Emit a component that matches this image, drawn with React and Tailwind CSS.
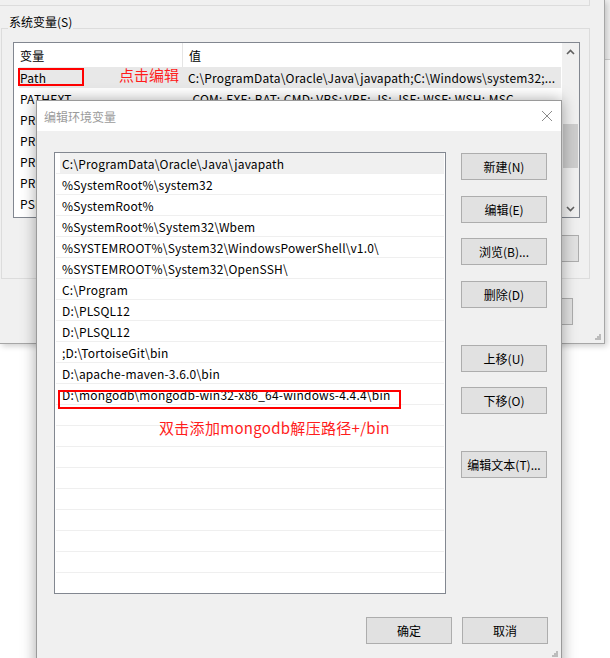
import React from 'react';

const PATHS = [
  'C:\\ProgramData\\Oracle\\Java\\javapath',
  '%SystemRoot%\\system32',
  '%SystemRoot%',
  '%SystemRoot%\\System32\\Wbem',
  '%SYSTEMROOT%\\System32\\WindowsPowerShell\\v1.0\\',
  '%SYSTEMROOT%\\System32\\OpenSSH\\',
  'C:\\Program',
  'D:\\PLSQL12',
  'D:\\PLSQL12',
  ';D:\\TortoiseGit\\bin',
  'D:\\apache-maven-3.6.0\\bin',
  'D:\\mongodb\\mongodb-win32-x86_64-windows-4.4.4\\bin',
];

const SYS_VARS = [
  { name: 'Path', value: 'C:\\ProgramData\\Oracle\\Java\\javapath;C:\\Windows\\system32;...' },
  { name: 'PATHEXT', value: '.COM;.EXE;.BAT;.CMD;.VBS;.VBE;.JS;.JSE;.WSF;.WSH;.MSC' },
  { name: 'PROCESSOR_ARCHITECTURE', value: 'AMD64' },
  { name: 'PROCESSOR_IDENTIFIER', value: 'Intel64 Family 6 Model 158' },
  { name: 'PROCESSOR_LEVEL', value: '6' },
  { name: 'PROCESSOR_REVISION', value: '9e0a' },
  { name: 'PSModulePath', value: '%ProgramFiles%\\WindowsPowerShell\\Modules' },
];

const Btn = ({ children, className = '' }) => (
  <div className={`flex items-center justify-center w-[86px] h-[27px] border border-[#adadad] bg-[#e1e1e1] text-[12px] text-black ${className}`}>
    {children}
  </div>
);

const Chevron = ({ up }) => (
  <svg width="9" height="6" viewBox="0 0 9 6">
    <path d={up ? 'M1 5 L4.5 1.5 L8 5' : 'M1 1 L4.5 4.5 L8 1'} fill="none" stroke="#606060" strokeWidth="1.6" />
  </svg>
);

const Grip = () => (
  <svg width="6" height="6" viewBox="0 0 6 6">
    <rect x="4" y="0" width="2" height="2" fill="#bcbcbc" />
    <rect x="2" y="2" width="2" height="2" fill="#bcbcbc" />
    <rect x="4" y="2" width="2" height="2" fill="#bcbcbc" />
    <rect x="0" y="4" width="2" height="2" fill="#bcbcbc" />
    <rect x="2" y="4" width="2" height="2" fill="#bcbcbc" />
    <rect x="4" y="4" width="2" height="2" fill="#bcbcbc" />
  </svg>
);

export default function App() {
  const emptyRows = Array.from({ length: 9 });

  return (
    <div className="relative w-[610px] h-[658px] bg-white overflow-hidden font-['Noto_Sans_CJK_SC',sans-serif] text-[12px] text-black">
      {/* window strip on the far right */}
      <div className="absolute right-0 top-0 w-[8px] h-[60px] bg-[#f0f0f0] border-b border-[#d0d0d0]" />

      {/* Back window: 环境变量 */}
      <div className="absolute left-0 top-0 w-[605px] h-[344px] bg-[#f0f0f0] border-r border-b border-[#a6a6a6] shadow-[2px_2px_6px_rgba(0,0,0,0.2)] flex flex-col">
        <div className="h-[6px] w-[590px] border-b border-r border-[#dcdcdc]" />

        <div className="relative mt-[22px] ml-[1px] w-[589px] h-[251px] border border-[#dcdcdc] flex flex-col">
          <span className="absolute left-[6px] -top-[15px] px-[1px] leading-[16px] bg-[#f0f0f0]">系统变量(S)</span>

          <div className="mt-[13px] ml-[11px] w-[567px] h-[176px] border border-[#828790] bg-white flex">
            <div className="flex-1 flex flex-col tracking-[0.2px]">
              <div className="h-[24px] flex items-center">
                <div className="w-[169px] h-full pl-[6px] pt-[1px] flex items-center border-r border-[#e5e5e5]">变量</div>
                <div className="pl-[6px] pt-[1px]">值</div>
              </div>
              {SYS_VARS.map((v, i) => (
                <div key={v.name} className={`h-[21px] ml-[5px] mr-[1px] pt-[1px] flex items-center whitespace-nowrap overflow-hidden ${i === 0 ? 'bg-[#e8e8e8]' : ''}`}>
                  <div className="w-[164px] pl-[1px] overflow-hidden">{v.name}</div>
                  <div className={i === 1 ? 'pl-[6px]' : 'pl-[5px]'}>{v.value}</div>
                </div>
              ))}
            </div>
            <div className="w-[17px] bg-[#f0f0f0] flex flex-col items-center">
              <div className="h-[17px] flex items-center justify-center"><Chevron up /></div>
              <div className="mt-[64px] w-[15px] h-[44px] bg-[#cdcdcd]" />
              <div className="flex-1" />
              <div className="h-[17px] flex items-center justify-center"><Chevron /></div>
            </div>
          </div>

          <div className="mt-[17px] flex justify-end pr-[10px]">
            <Btn>编辑(I)...</Btn>
          </div>
        </div>

        <div className="mt-[19px] ml-[487px]">
          <Btn>取消</Btn>
        </div>
        <div className="absolute right-[3px] bottom-[3px]"><Grip /></div>
      </div>

      {/* annotation on back window */}
      <div className="absolute left-[18px] top-[68px] w-[66px] h-[18px] border-2 border-[#ff0000]" />
      <span className="absolute left-[119px] top-[65px] text-[15px] leading-[20px] text-[#ff1c1c]">点击编辑</span>

      {/* Front dialog: 编辑环境变量 */}
      <div className="absolute left-[36px] top-[100px] w-[526px] h-[575px] bg-[#f0f0f0] border border-[#9a9a9a] shadow-[0_0_14px_rgba(0,0,0,0.35)] flex flex-col">
        <div className="h-[30px] bg-white flex items-center justify-between pl-[7px] pr-[8px]">
          <span className="text-[#9b9b9b] pt-[1px]">编辑环境变量</span>
          <svg width="12" height="12" viewBox="0 0 12 12">
            <path d="M1 1 L11 11 M11 1 L1 11" stroke="#8a8a8a" strokeWidth="1" fill="none" />
          </svg>
        </div>

        <div className="flex pt-[21px] pl-[17px]">
          <div className="w-[392px] h-[442px] border border-[#828790] bg-white flex flex-col overflow-hidden tracking-[0.2px]">
            {PATHS.map((p, i) => (
              <div key={i} className="h-[21px] shrink-0 mx-[1px] border-b border-[#efefef] flex pl-[4px]">
                <div className={`flex-1 flex items-center pl-[2px] pt-[2px] whitespace-nowrap ${i === 0 ? 'bg-[#f0f0f0]' : ''}`}>{p}</div>
              </div>
            ))}
            {emptyRows.map((_, i) => (
              <div key={'e' + i} className="h-[21px] shrink-0 mx-[1px] border-b border-[#efefef]" />
            ))}
          </div>

          <div className="ml-[15px] pt-[1px] flex flex-col">
            <Btn>新建(N)</Btn>
            <Btn className="mt-[16px]">编辑(E)</Btn>
            <Btn className="mt-[15px]">浏览(B)...</Btn>
            <Btn className="mt-[16px]">删除(D)</Btn>
            <Btn className="mt-[37px]">上移(U)</Btn>
            <Btn className="mt-[15px]">下移(O)</Btn>
            <Btn className="mt-[37px]">编辑文本(T)...</Btn>
          </div>
        </div>

        <div className="mt-[23px] flex justify-end gap-[10px] pr-[13px]">
          <Btn>确定</Btn>
          <Btn>取消</Btn>
        </div>
        <div className="absolute left-[515px] top-[550px]"><Grip /></div>
      </div>

      {/* annotation on dialog */}
      <div className="absolute left-[58px] top-[390px] w-[343px] h-[19px] border-2 border-[#ff0000]" />
      <span className="absolute left-[159px] top-[418px] text-[15px] leading-[20px] tracking-[0.3px] text-[#ff1c1c]">双击添加mongodb解压路径+/bin</span>
    </div>
  );
}
